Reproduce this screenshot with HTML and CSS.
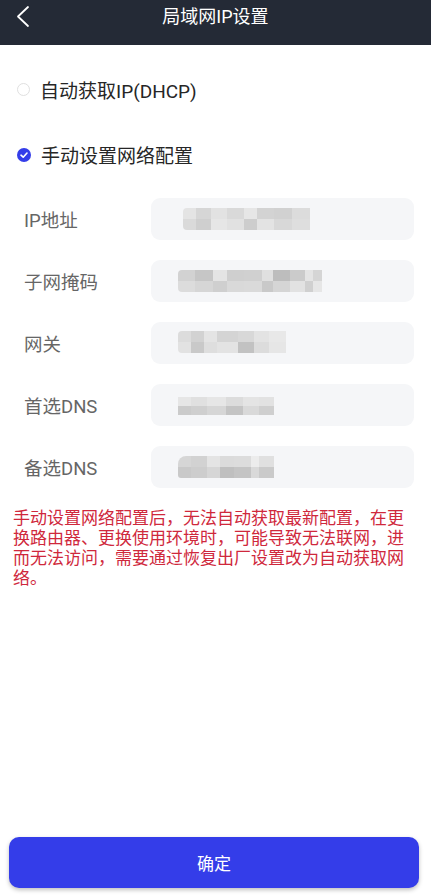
FILE: index.html
```html
<!DOCTYPE html>
<html>
<head>
<meta charset="utf-8">
<title>局域网IP设置</title>
<link rel="stylesheet" href="styles.css">
</head>
<body>

<!-- top bar -->
<div class="topbar">
    <div class="back">
        <svg width="14" height="24" viewBox="0 0 14 24">
            <polyline points="12,2 2,11.5 12,21" fill="none" stroke="#ffffff" stroke-width="1.8" stroke-linecap="round" stroke-linejoin="round"/>
        </svg>
    </div>
    <div class="title">局域网IP设置</div>
    <div></div>
</div>

<!-- mode choice -->
<div class="modes">
    <div class="mode">
        <span class="radio"></span>
        <span>自动获取IP(DHCP)</span>
    </div>
    <div class="mode">
        <svg class="radio-on" width="14" height="14" viewBox="0 0 14 14">
            <circle cx="7" cy="7" r="7" fill="#343de9"/>
            <polyline points="4,7.2 6.2,9.2 10,5" fill="none" stroke="#ffffff" stroke-width="1.6" stroke-linecap="round" stroke-linejoin="round"/>
        </svg>
        <span>手动设置网络配置</span>
    </div>
</div>

<!-- fields -->
<div class="fields">
    <div class="field">
        <div class="label">IP地址</div>
        <div class="box"><span class="mosaic m-ip"></span></div>
    </div>
    <div class="field">
        <div class="label">子网掩码</div>
        <div class="box"><span class="mosaic m-mask"></span></div>
    </div>
    <div class="field">
        <div class="label">网关</div>
        <div class="box"><span class="mosaic m-gw"></span></div>
    </div>
    <div class="field">
        <div class="label">首选DNS</div>
        <div class="box"><span class="mosaic m-dns1"></span></div>
    </div>
    <div class="field">
        <div class="label">备选DNS</div>
        <div class="box"><span class="mosaic m-dns2"></span></div>
    </div>
</div>

<p class="warning">手动设置网络配置后，无法自动获取最新配置，在更换路由器、更换使用环境时，可能导致无法联网，进而无法访问，需要通过恢复出厂设置改为自动获取网络。</p>

<div class="footer">
    <button class="ok-button">确定</button>
</div>

</body>
</html>
```

FILE: styles.css
```css
html, body {
    margin: 0;
    padding: 0;
}

body {
    background-color: #ffffff;
    font-family: Roboto, "Noto Sans CJK SC", sans-serif;
    width: 431px;
    height: 896px;
    display: flex;
    flex-direction: column;
}

.topbar {
    background-color: #242a36;
    height: 45px;
    display: grid;
    grid-template-columns: 60px 1fr 60px;
    color: #ffffff;
}

.back {
    padding: 5px 0 0 16px;
}

.title {
    text-align: center;
    font-size: 18px;
    line-height: 34px;
}

.modes {
    padding-top: 12px;
}

.mode {
    height: 65px;
    display: flex;
    align-items: center;
    padding-left: 17px;
    font-size: 19px;
    color: #262626;
}

.radio {
    width: 11px;
    height: 11px;
    border: 1.5px solid #e0e0e0;
    border-radius: 50%;
    margin-right: 10px;
}

.radio-on {
    margin-right: 10px;
}

.fields {
    margin-top: 11px;
    padding: 0 17px 0 24px;
    display: flex;
    flex-direction: column;
    gap: 20px;
}

.field {
    display: grid;
    grid-template-columns: 127px 1fr;
    align-items: center;
}

.label {
    font-size: 18.5px;
    color: #666666;
}

.box {
    height: 42px;
    background-color: #f5f6f8;
    border-radius: 9px;
    display: flex;
    align-items: center;
    padding-left: 27px;
}

.mosaic {
    display: block;
    height: 22px;
    border-radius: 4px 0 0 4px;
    filter: blur(0.4px);
    background-repeat: no-repeat;
    background-size: 100% 50%;
    background-position: top, bottom;
}

.m-ip {
    width: 127px;
    margin-left: 5px;
    background-image:
        linear-gradient(90deg, #e4e4e4 0 10%, #d6d6d6 10% 22%, #e2e2e2 22% 35%, #d9d9d9 35% 48%, #e6e6e6 48% 58%, #d3d3d3 58% 72%, #d1d1d1 72% 86%, #dcdcdc 86% 100%),
        linear-gradient(90deg, #dadada 0 10%, #cfcfcf 10% 22%, #e6e6e6 22% 35%, #e1e1e1 35% 48%, #cdcdcd 48% 58%, #e3e3e3 58% 72%, #d8d8d8 72% 86%, #dedede 86% 100%);
}

.m-mask {
    width: 144px;
    background-image:
        linear-gradient(90deg, #d2d2d2 0 12%, #c6c6c6 12% 24%, #e4e4e4 24% 34%, #cfcfcf 34% 46%, #d0d0d0 46% 58%, #e0e0e0 58% 66%, #bdbdbd 66% 78%, #cbcbcb 78% 88%, #e4e4e4 88% 94%, #d5d5d5 94% 100%),
        linear-gradient(90deg, #dcdcdc 0 12%, #d6d6d6 12% 24%, #cfcfcf 24% 34%, #d9d9d9 34% 46%, #dadada 46% 58%, #c9c9c9 58% 66%, #d5d5d5 66% 78%, #e2e2e2 78% 88%, #d0d0d0 88% 94%, #e6e6e6 94% 100%);
}

.m-gw {
    width: 108px;
    margin-top: -2px;
    background-image:
        linear-gradient(90deg, #dcdcdc 0 12%, #d2d2d2 12% 24%, #e4e4e4 24% 36%, #d4d4d4 36% 56%, #d8d8d8 56% 70%, #e3e3e3 70% 84%, #e8e8e8 84% 100%),
        linear-gradient(90deg, #e2e2e2 0 12%, #c9c9c9 12% 24%, #dedede 24% 36%, #e3e3e3 36% 56%, #c2c2c2 56% 70%, #dcdcdc 70% 84%, #e6e6e6 84% 100%);
}

.m-dns1 {
    width: 96px;
    height: 18px;
    margin-top: 2px;
    border-radius: 0;
    background-image:
        linear-gradient(90deg, #e6e6e6 0 14%, #e0e0e0 14% 30%, #e6e6e6 30% 50%, #dcdcdc 50% 68%, #e4e4e4 68% 84%, #e2e2e2 84% 100%),
        linear-gradient(90deg, #cbcbcb 0 14%, #cfcfcf 14% 30%, #d6d6d6 30% 50%, #c4c4c4 50% 68%, #d9d9d9 68% 84%, #cfcfcf 84% 100%);
}

.m-dns2 {
    width: 96px;
    border-radius: 8px 0 0 3px;
    background-image:
        linear-gradient(90deg, #d6d6d6 0 14%, #d2d2d2 14% 30%, #e4e4e4 30% 44%, #dbdbdb 44% 58%, #dcdcdc 58% 76%, #ececec 76% 84%, #e0e0e0 84% 100%),
        linear-gradient(90deg, #c9c9c9 0 14%, #cdcdcd 14% 30%, #d6d6d6 30% 44%, #bfbfbf 44% 58%, #c4c4c4 58% 76%, #d9d9d9 76% 84%, #cacaca 84% 100%);
}

.warning {
    margin: 20px 0 0 0;
    padding: 0 13px;
    font-size: 17px;
    line-height: 20px;
    color: #cf283c;
}

.footer {
    margin-top: auto;
    padding: 0 12px 8px 9px;
}

.ok-button {
    display: block;
    width: 100%;
    height: 51px;
    border: none;
    border-radius: 10px;
    background-color: #343de9;
    color: #ffffff;
    font-family: Roboto, "Noto Sans CJK SC", sans-serif;
    font-size: 17px;
    box-shadow: 0 2px 4px rgba(0, 0, 0, 0.25);
}
```
